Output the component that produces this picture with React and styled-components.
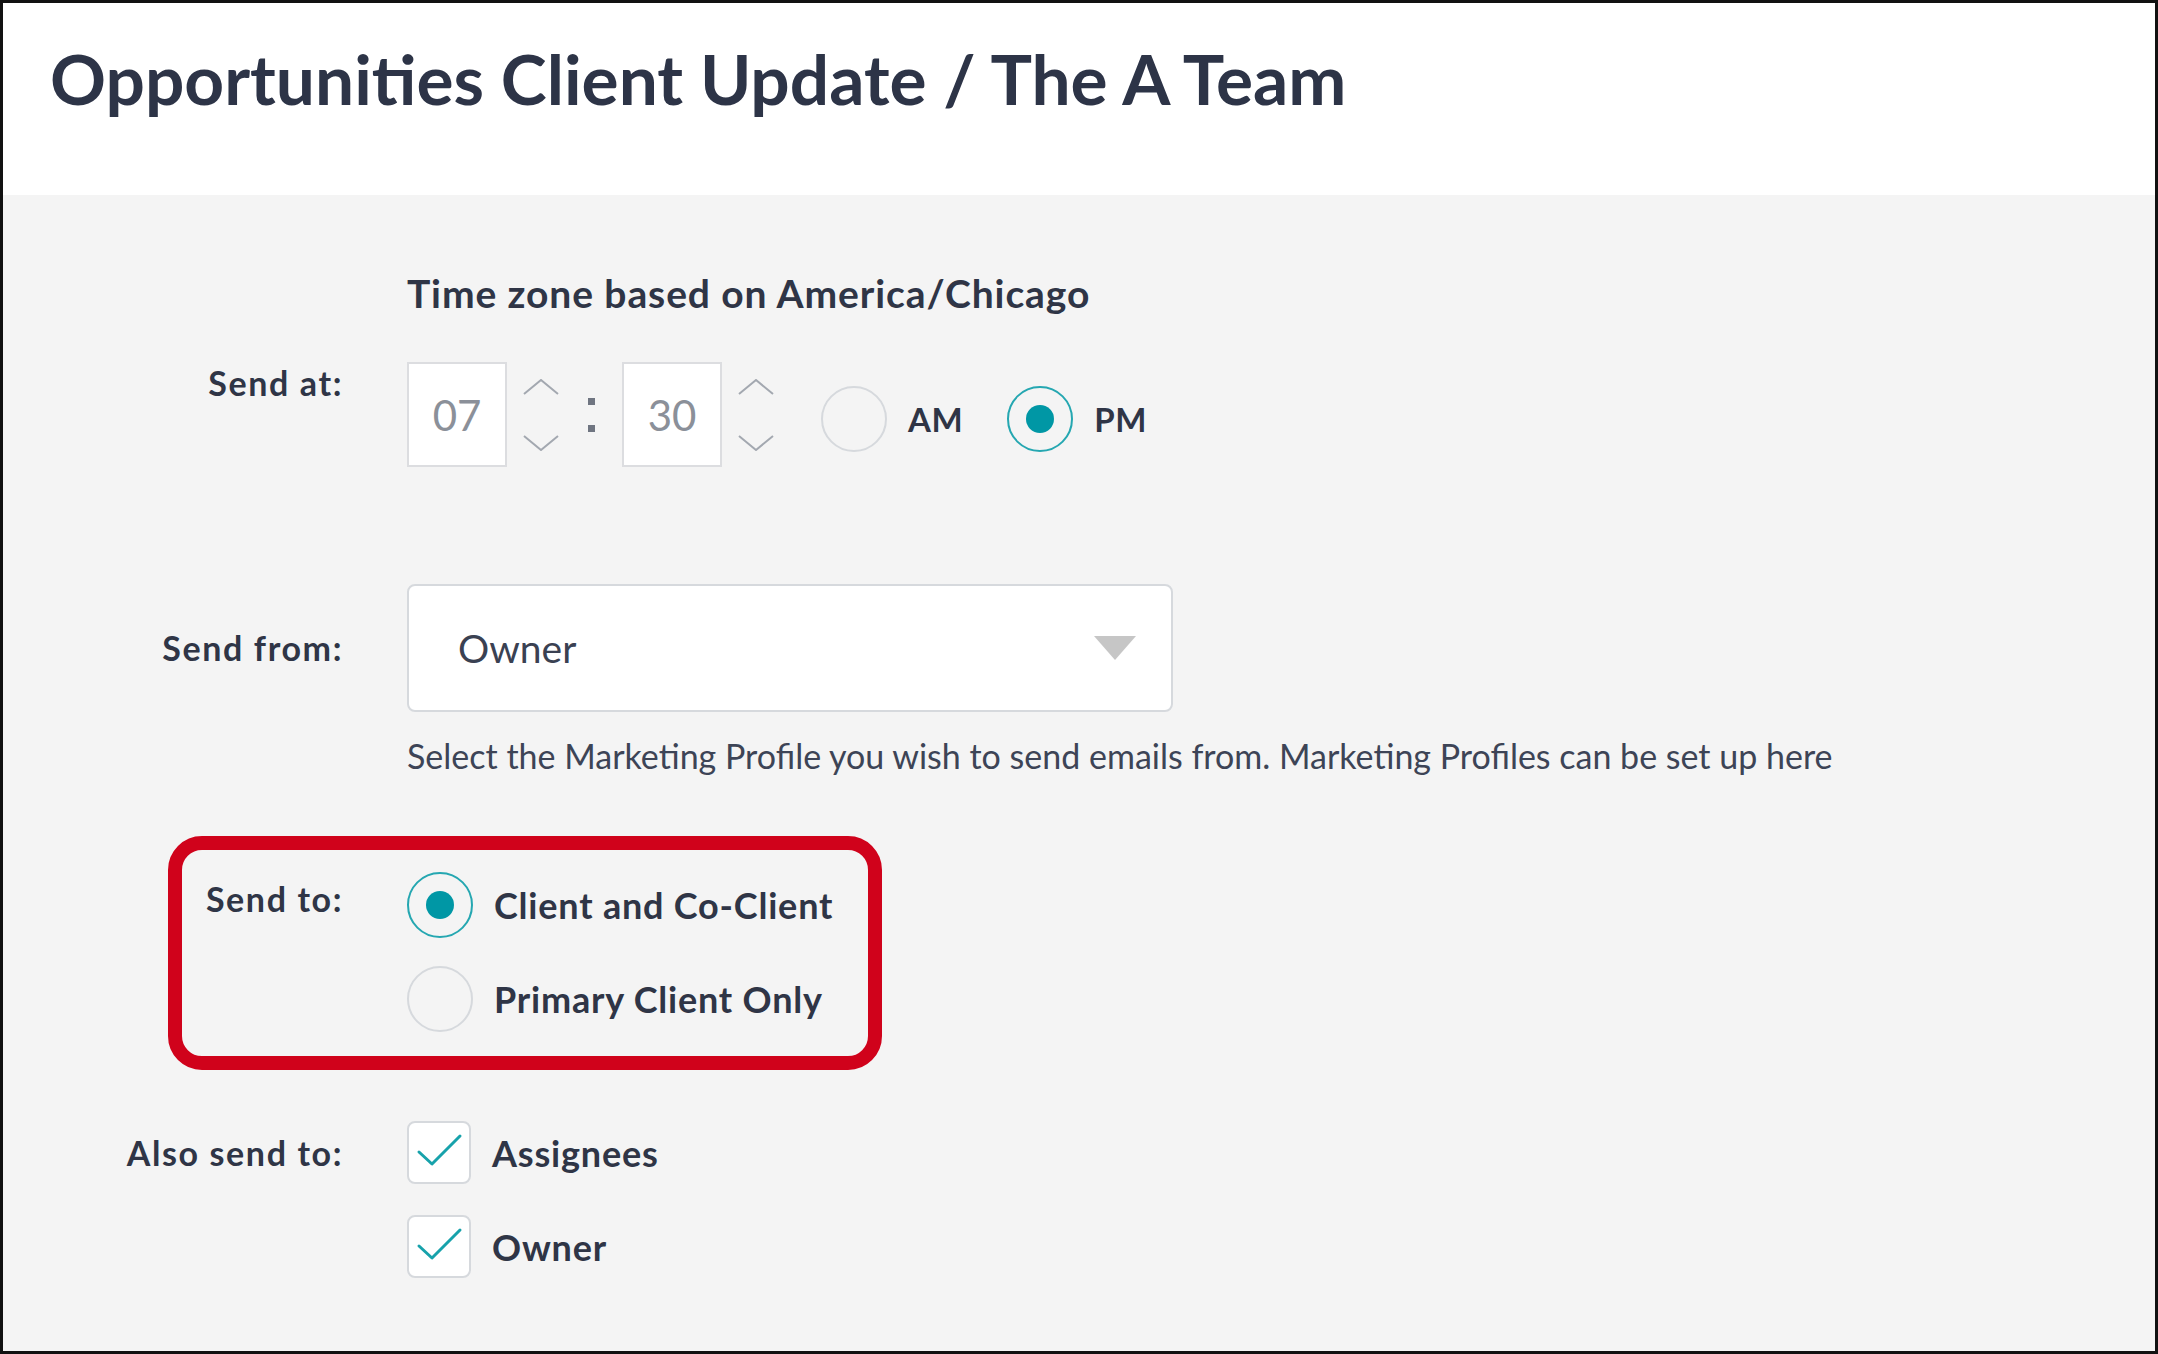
import React from "react";
import styled, { createGlobalStyle } from "styled-components";

const GlobalStyle = createGlobalStyle`
  html, body {
    margin: 0;
    padding: 0;
    background: #fff;
  }
  body {
    font-family: Lato, "Liberation Sans", sans-serif;
    color: #2f3546;
  }
  * {
    box-sizing: border-box;
  }
`;

const TEAL = "#0097a5";

function App() {
  return (
    <Frame>
      <GlobalStyle />
      <Header>
        <Title>Opportunities Client Update / The A Team</Title>
      </Header>
      <Body>
        <Row>
          <Label />
          <ZoneText>Time zone based on America/Chicago</ZoneText>
        </Row>

        <Row $mt={47}>
          <Label $offset={2}>Send at:</Label>
          <TimeGroup>
            <TimeBox>07</TimeBox>
            <Spinner />
            <Colon>
              <Dot />
              <Dot />
            </Colon>
            <TimeBox>30</TimeBox>
            <Spinner />
            <Meridiem>
              <RadioOption label="AM" />
              <RadioOption label="PM" checked />
            </Meridiem>
          </TimeGroup>
        </Row>

        <Row $mt={117} $align="center">
          <Label>Send from:</Label>
          <Select>
            <SelectValue>Owner</SelectValue>
            <Caret />
          </Select>
        </Row>

        <Row $mt={23}>
          <Label />
          <Hint>
            Select the Marketing Profile you wish to send emails from. Marketing
            Profiles can be set up here
          </Hint>
        </Row>

        <Highlight>
          <Row>
            <Label $w={159} $offset={8}>
              Send to:
            </Label>
            <Options $gap={28}>
              <RadioOption label="Client and Co-Client" checked big />
              <RadioOption label="Primary Client Only" big />
            </Options>
          </Row>
        </Highlight>

        <Row $mt={51}>
          <Label $offset={13}>Also send to:</Label>
          <Options $gap={31}>
            <CheckOption label="Assignees" />
            <CheckOption label="Owner" />
          </Options>
        </Row>
      </Body>
    </Frame>
  );
}

function Spinner() {
  return (
    <SpinWrap>
      <svg width="36" height="16" viewBox="0 0 36 16">
        <polyline points="1,15 18,1 35,15" fill="none" stroke="#a3a8b0" strokeWidth="2" />
      </svg>
      <svg width="36" height="16" viewBox="0 0 36 16">
        <polyline points="1,1 18,15 35,1" fill="none" stroke="#a3a8b0" strokeWidth="2" />
      </svg>
    </SpinWrap>
  );
}

function Caret() {
  return (
    <svg width="42" height="24" viewBox="0 0 42 24">
      <polygon points="0,0 42,0 21,24" fill="#c6c6c6" />
    </svg>
  );
}

function RadioOption({ label, checked, big }) {
  return (
    <OptionRow>
      <RadioCircle $checked={checked}>{checked && <RadioDot />}</RadioCircle>
      <OptionText $big={big}>{label}</OptionText>
    </OptionRow>
  );
}

function CheckOption({ label }) {
  return (
    <OptionRow>
      <CheckBox>
        <svg width="64" height="63" viewBox="0 0 64 63">
          <polyline
            points="12,31 25,43 53,15"
            fill="none"
            stroke="#17a2ab"
            strokeWidth="3"
            strokeLinecap="round"
            strokeLinejoin="round"
          />
        </svg>
      </CheckBox>
      <OptionText $big>{label}</OptionText>
    </OptionRow>
  );
}

export default App;

const Frame = styled.div`
  width: 2158px;
  height: 1354px;
  border: 3px solid #111;
  display: flex;
  flex-direction: column;
  background: #f4f4f4;
`;

const Header = styled.header`
  height: 192px;
  flex-shrink: 0;
  background: #fff;
  padding: 34px 0 0 47px;
`;

const Title = styled.h1`
  margin: 0;
  font-size: 69.4px;
  line-height: 84px;
  font-weight: 700;
  color: #2d3447;
`;

const Body = styled.main`
  flex: 1;
  padding: 76px 0 0 47px;
`;

const Row = styled.div`
  display: flex;
  align-items: ${(p) => p.$align || "flex-start"};
  gap: 66px;
  margin-top: ${(p) => p.$mt || 0}px;
`;

/* trailing letter-spacing pushes the text left, so the box is 2px wider */
const Label = styled.div`
  width: ${(p) => (p.$w || 291) + 2}px;
  flex-shrink: 0;
  margin-top: ${(p) => p.$offset || 0}px;
  margin-right: -2px;
  text-align: right;
  font-size: 34px;
  line-height: 38px;
  letter-spacing: 1.6px;
  font-weight: 700;
  color: #2f3546;
`;

const ZoneText = styled.div`
  font-size: 39px;
  line-height: 44px;
  letter-spacing: 0.9px;
  font-weight: 700;
  color: #2f3546;
`;

const TimeGroup = styled.div`
  display: flex;
  align-items: center;
`;

const TimeBox = styled.div`
  width: 100px;
  height: 105px;
  background: #fff;
  border: 2px solid #dcdde0;
  display: flex;
  align-items: center;
  justify-content: center;
  font-size: 42px;
  color: #8b9099;
`;

const SpinWrap = styled.div`
  display: flex;
  flex-direction: column;
  gap: 40px;
  margin-left: 16px;
`;

const Colon = styled.div`
  display: flex;
  flex-direction: column;
  gap: 20px;
  margin: 0 27px 0 29px;
`;

const Dot = styled.span`
  width: 7px;
  height: 7px;
  background: #6f7581;
`;

const Meridiem = styled.div`
  display: flex;
  align-items: center;
  gap: 44px;
  margin: 9px 0 0 47px;
`;

const OptionRow = styled.div`
  display: flex;
  align-items: center;
  gap: 21px;
`;

const RadioCircle = styled.span`
  width: 66px;
  height: 66px;
  border-radius: 50%;
  border: 2px solid ${(p) => (p.$checked ? "#25a7b1" : "#d6d9dd")};
  display: flex;
  align-items: center;
  justify-content: center;
  flex-shrink: 0;
`;

const RadioDot = styled.span`
  width: 28px;
  height: 28px;
  border-radius: 50%;
  background: ${TEAL};
`;

const OptionText = styled.span`
  font-size: ${(p) => (p.$big ? 36 : 33)}px;
  letter-spacing: ${(p) => (p.$big ? 0.8 : 0.6)}px;
  line-height: 40px;
  font-weight: 700;
  color: #2f3546;
`;

const Select = styled.div`
  width: 766px;
  height: 128px;
  background: #fff;
  border: 2px solid #d6d9dd;
  border-radius: 8px;
  padding: 0 35px 0 49px;
  display: flex;
  align-items: center;
  justify-content: space-between;
`;

const SelectValue = styled.span`
  font-size: 39px;
  color: #3a4152;
`;

const Hint = styled.div`
  font-size: 34px;
  line-height: 41px;
  color: #3d4456;
`;

const Highlight = styled.div`
  width: 714px;
  margin: 60px 0 0 118px;
  border: 14px solid #d0021b;
  border-radius: 34px;
  padding: 22px 0 24px;
`;

const Options = styled.div`
  display: flex;
  flex-direction: column;
  gap: ${(p) => p.$gap}px;
`;

const CheckBox = styled.span`
  width: 64px;
  height: 63px;
  flex-shrink: 0;
  background: #fff;
  border: 2px solid #d6d9dd;
  border-radius: 8px;
  display: flex;
  align-items: center;
  justify-content: center;
  svg {
    flex-shrink: 0;
  }
`;
